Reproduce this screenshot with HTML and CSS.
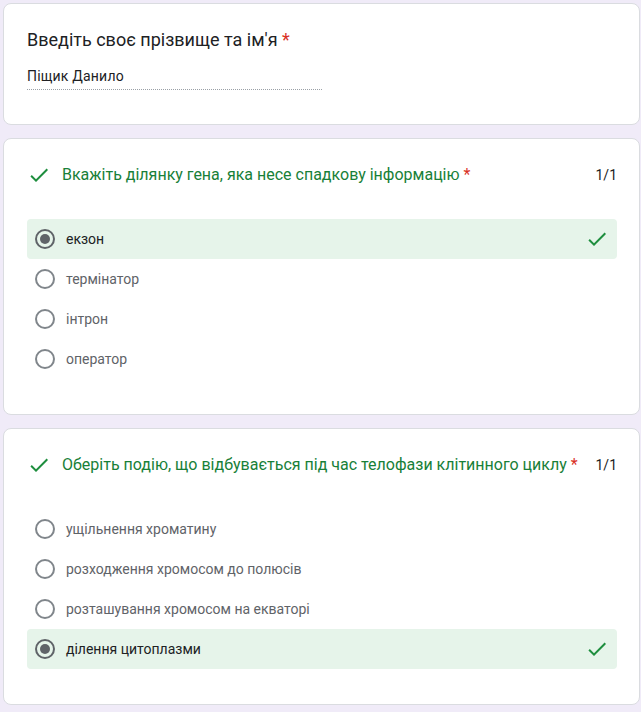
FILE: index.html
```html
<!DOCTYPE html>
<html lang="uk">
<head>
<meta charset="utf-8">
<link rel="stylesheet" href="styles.css">
</head>
<body>
<div class="page">
  <section class="card card-name">
    <div class="q-title">Введіть своє прізвище та ім'я <span class="req">*</span></div>
    <div class="answer">Піщик Данило</div>
  </section>

  <section class="card card-q">
    <div class="q-head">
      <svg class="icon" viewBox="0 0 24 24"><path d="M9 16.17L4.83 12l-1.42 1.41L9 19 21 7l-1.41-1.41z"/></svg>
      <div class="q-text">Вкажіть ділянку гена, яка несе спадкову інформацію <span class="req">*</span></div>
      <div class="score">1/1</div>
    </div>
    <div class="options">
      <div class="opt opt-correct">
        <span class="radio checked"></span><span class="opt-label">екзон</span>
        <svg class="icon opt-check" viewBox="0 0 24 24"><path d="M9 16.17L4.83 12l-1.42 1.41L9 19 21 7l-1.41-1.41z"/></svg>
      </div>
      <div class="opt"><span class="radio"></span><span class="opt-label">термінатор</span></div>
      <div class="opt"><span class="radio"></span><span class="opt-label">інтрон</span></div>
      <div class="opt"><span class="radio"></span><span class="opt-label">оператор</span></div>
    </div>
  </section>

  <section class="card card-q">
    <div class="q-head">
      <svg class="icon" viewBox="0 0 24 24"><path d="M9 16.17L4.83 12l-1.42 1.41L9 19 21 7l-1.41-1.41z"/></svg>
      <div class="q-text">Оберіть подію, що відбувається під час телофази клітинного циклу <span class="req">*</span></div>
      <div class="score">1/1</div>
    </div>
    <div class="options">
      <div class="opt"><span class="radio"></span><span class="opt-label">ущільнення хроматину</span></div>
      <div class="opt"><span class="radio"></span><span class="opt-label">розходження хромосом до полюсів</span></div>
      <div class="opt"><span class="radio"></span><span class="opt-label">розташування хромосом на екваторі</span></div>
      <div class="opt opt-correct">
        <span class="radio checked"></span><span class="opt-label">ділення цитоплазми</span>
        <svg class="icon opt-check" viewBox="0 0 24 24"><path d="M9 16.17L4.83 12l-1.42 1.41L9 19 21 7l-1.41-1.41z"/></svg>
      </div>
    </div>
  </section>
</div>
</body>
</html>
```

FILE: styles.css
```css
* { box-sizing: border-box; }
html, body {
  margin: 0;
  background: #f0ebf8;
  font-family: Roboto, "Noto Sans", Arial, sans-serif;
  color: #202124;
}
.page {
  padding: 3px 1px 0 3px;
  display: flex;
  flex-direction: column;
  gap: 13px;
}
.card {
  background: #fff;
  border: 1px solid #dadce0;
  border-radius: 8px;
}
.card-name {
  height: 122px;
  padding: 23px 22px 0 23px;
}
.q-title {
  font-size: 18px;
  line-height: 26px;
  color: #202124;
}
.req { color: #d93025; }
.answer {
  margin-top: 13px;
  width: 295px;
  font-size: 14px;
  line-height: 20px;
  letter-spacing: 0.2px;
  padding-bottom: 3px;
  border-bottom: 1px dotted #9aa0a6;
  color: #202124;
}
.card-q {
  padding: 23px 22px 35px 23px;
}
.q-head {
  display: flex;
  align-items: center;
  height: 26px;
}
.icon {
  width: 24px;
  height: 24px;
  fill: #1e8e3e;
  flex: none;
}
.q-text {
  margin-left: 11px;
  flex: 1;
  font-size: 16px;
  line-height: 26px;
  color: #188038;
  white-space: nowrap;
}
.score {
  font-size: 14px;
  color: #202124;
  margin-left: 12px;
}
.options {
  margin-top: 31px;
  display: flex;
  flex-direction: column;
}
.opt {
  display: flex;
  align-items: center;
  height: 40px;
  padding: 0 8px;
  border-radius: 4px;
}
.opt-correct {
  background: #e6f4ea;
}
.radio {
  width: 20px;
  height: 20px;
  border-radius: 50%;
  border: 2px solid #80868b;
  flex: none;
  display: flex;
  align-items: center;
  justify-content: center;
}
.radio.checked { border-color: #5f6368; }
.radio.checked::after {
  content: "";
  width: 10px;
  height: 10px;
  border-radius: 50%;
  background: #5f6368;
}
.opt-label {
  margin-left: 11px;
  font-size: 14px;
  color: #5f6368;
  flex: 1;
}
.opt-correct .opt-label { color: #202124; }
.opt-check { margin-left: auto; }
```
